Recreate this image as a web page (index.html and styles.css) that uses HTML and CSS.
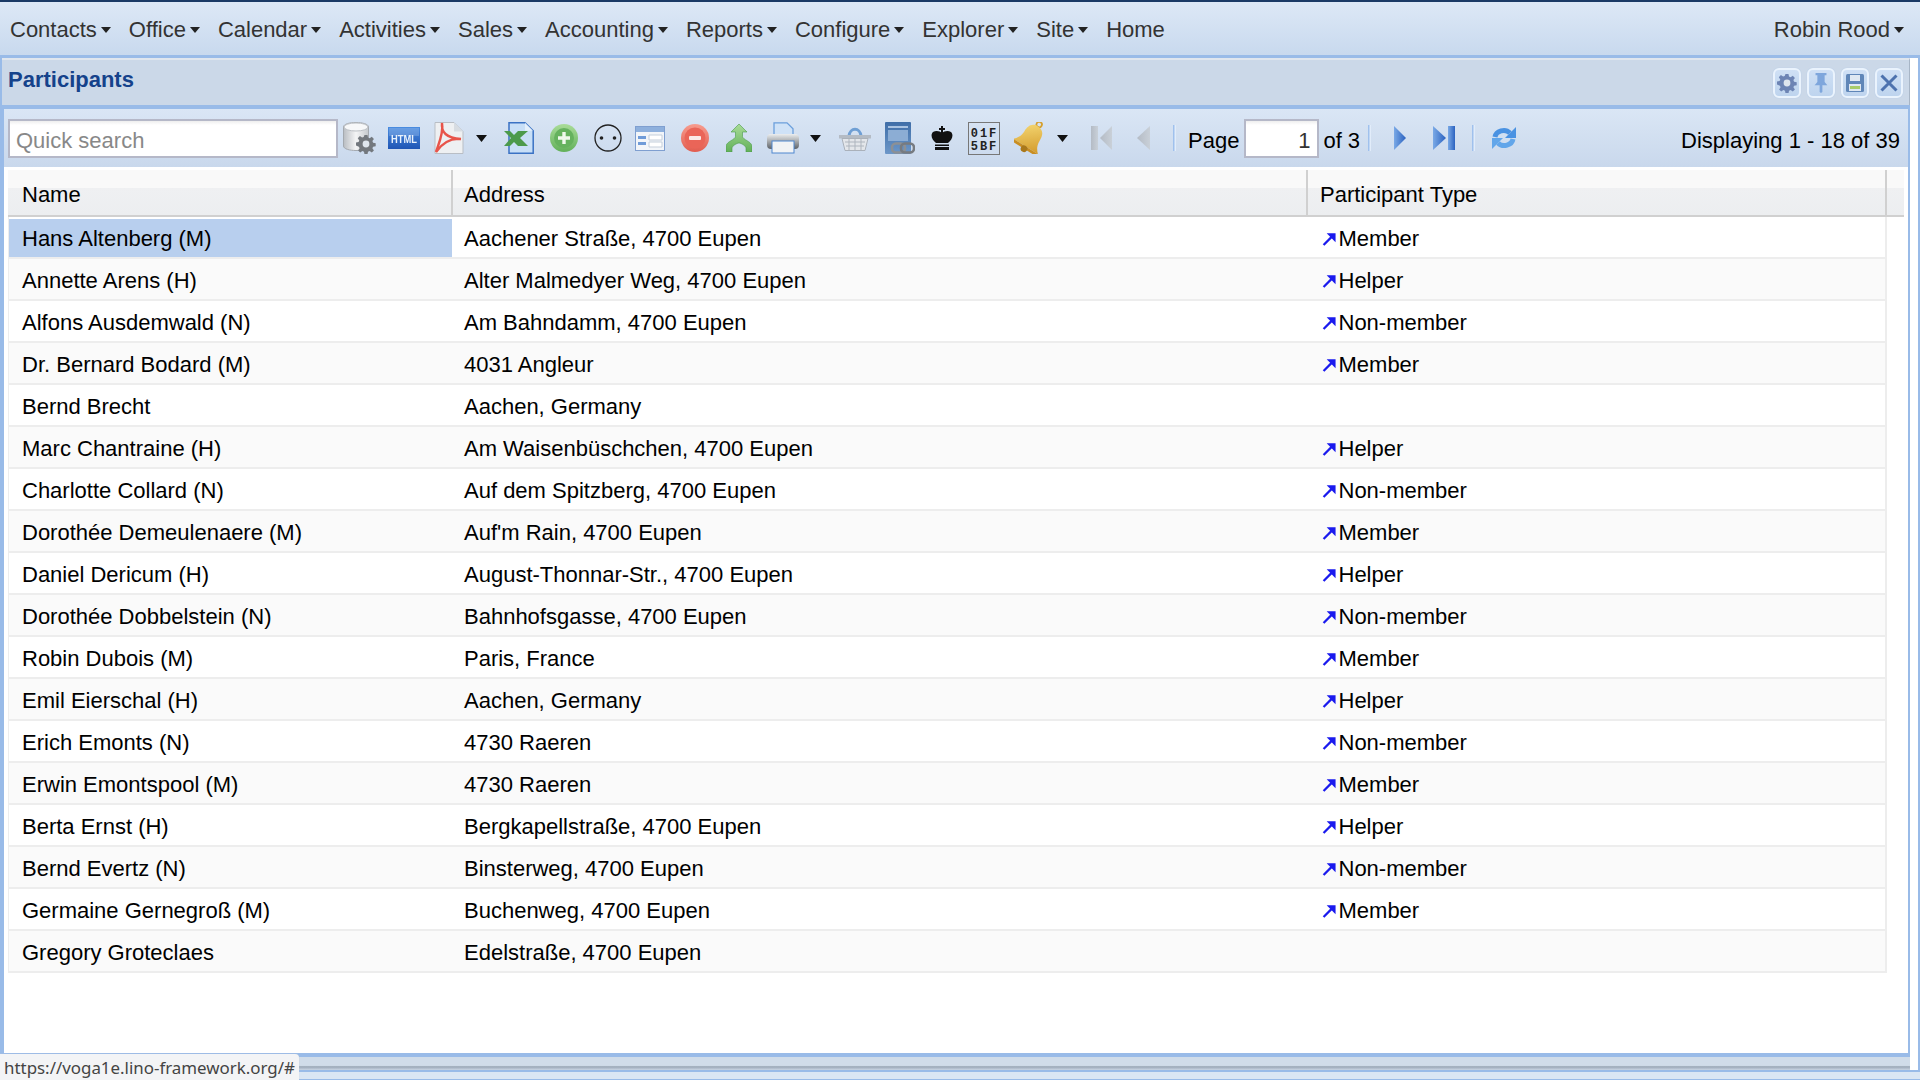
FILE: index.html
```html
<!DOCTYPE html>
<html lang="en">
<head>
<meta charset="utf-8">
<title>Participants</title>
<link rel="stylesheet" href="styles.css">
</head>
<body>
<svg class="defs" aria-hidden="true">
  <defs>
    <linearGradient id="gBlue" x1="0" y1="0" x2="0" y2="1"><stop offset="0" stop-color="#4a8ce0"/><stop offset="1" stop-color="#1f55b5"/></linearGradient>
    <linearGradient id="gNav" x1="0" y1="0" x2="1" y2="0"><stop offset="0" stop-color="#7aa9e6"/><stop offset="1" stop-color="#2b62c0"/></linearGradient>
    <linearGradient id="gGray" x1="0" y1="0" x2="1" y2="0"><stop offset="0" stop-color="#b4bbc5"/><stop offset="1" stop-color="#c9d0d8"/></linearGradient>
    <linearGradient id="gGreen" x1="0" y1="0" x2="0" y2="1"><stop offset="0" stop-color="#a9dc98"/><stop offset="1" stop-color="#62b059"/></linearGradient>
    <linearGradient id="gRed" x1="0" y1="0" x2="0" y2="1"><stop offset="0" stop-color="#f79c8e"/><stop offset="1" stop-color="#e25c4f"/></linearGradient>
    <linearGradient id="gBell" x1="0" y1="0" x2="1" y2="1"><stop offset="0" stop-color="#f8de7c"/><stop offset="1" stop-color="#d39a2a"/></linearGradient>
    <linearGradient id="gCyl" x1="0" y1="0" x2="1" y2="0"><stop offset="0" stop-color="#b9bdc2"/><stop offset=".5" stop-color="#f4f5f6"/><stop offset="1" stop-color="#c4c8cc"/></linearGradient>
    <linearGradient id="gPrn" x1="0" y1="0" x2="0" y2="1"><stop offset="0" stop-color="#eceeef"/><stop offset="1" stop-color="#5d6268"/></linearGradient>
    <linearGradient id="gBook" x1="0" y1="0" x2="0" y2="1"><stop offset="0" stop-color="#3f6ea8"/><stop offset="1" stop-color="#6d97c8"/></linearGradient>
    <symbol id="ext" viewBox="0 0 14 14"><path d="M1.500 12.500 11 3" fill="none" stroke="#1a1aee" stroke-width="2.200"/><path d="M4.500 1.200h8.600v8.600z" fill="#1a1aee"/></symbol>
    <symbol id="gear" viewBox="0 0 20 20"><path d="M8.500 1h3l.5 2.600 1.600.7 2.200-1.500 2.100 2.100-1.500 2.200.7 1.600 2.600.5v3l-2.600.5-.7 1.600 1.500 2.200-2.100 2.100-2.200-1.500-1.600.7-.5 2.600h-3l-.5-2.600-1.600-.7-2.200 1.500-2.100-2.100 1.500-2.200-.7-1.600L0 11.500v-3l2.600-.5.7-1.600-1.500-2.200 2.100-2.100 2.200 1.500 1.600-.7z" fill="currentColor"/><circle cx="10" cy="10" r="3.400" fill="#dfe6ee"/></symbol>
  </defs>
</svg>

<div class="page">
  <nav class="menubar">
    <a class="menu-item">Contacts<i class="mcaret"></i></a>
    <a class="menu-item">Office<i class="mcaret"></i></a>
    <a class="menu-item">Calendar<i class="mcaret"></i></a>
    <a class="menu-item">Activities<i class="mcaret"></i></a>
    <a class="menu-item">Sales<i class="mcaret"></i></a>
    <a class="menu-item">Accounting<i class="mcaret"></i></a>
    <a class="menu-item">Reports<i class="mcaret"></i></a>
    <a class="menu-item">Configure<i class="mcaret"></i></a>
    <a class="menu-item">Explorer<i class="mcaret"></i></a>
    <a class="menu-item">Site<i class="mcaret"></i></a>
    <a class="menu-item">Home</a>
    <a class="menu-item user">Robin Rood<i class="mcaret"></i></a>
  </nav>

  <div class="desk">
    <main class="window">
      <header class="win-head">
        <h1 class="win-title">Participants</h1>
        <div class="win-tools">
          <span class="tool"><svg class="ti ti-gear"><use href="#gear"/></svg></span>
          <span class="tool"><svg class="ti" viewBox="0 0 20 22"><path d="M4 0h12v2.500h-2v7.500l3 3.500H3l3-3.500V2.500H4zM8.500 13.500h3V21l-1.500 1-1.500-1z" fill="#7ea6dc"/></svg></span>
          <span class="tool"><svg class="ti" viewBox="0 0 20 20"><rect x="1" y="1" width="18" height="18" rx="1.500" fill="#5f86b8"/><rect x="5" y="2" width="10" height="6" fill="#dfe8f2"/><rect x="4" y="11" width="12" height="7" fill="#dfe8f2"/><rect x="5" y="13" width="10" height="3" fill="#a7cc6a"/></svg></span>
          <span class="tool"><svg class="ti" viewBox="0 0 20 20"><path d="M2.500 2.500 17.500 17.500M17.500 2.500 2.500 17.500" stroke="#4d72ae" stroke-width="3" fill="none"/></svg></span>
        </div>
      </header>

      <div class="win-body">
        <div class="toolbar">
          <input class="field search" type="text" placeholder="Quick search">
          <svg class="ic i-db" viewBox="0 0 33 32"><path d="M.5 5c0-6 25-6 25 0v19c0 6-25 6-25 0z" fill="url(#gCyl)" stroke="#a4a9af"/><ellipse cx="13" cy="5" rx="12" ry="4" fill="#f7f8f9" stroke="#bcc0c5"/><svg x="13" y="12" width="20" height="20" color="#73787e"><use href="#gear"/></svg></svg>
          <svg class="ic i-html" viewBox="0 0 32 22"><rect width="32" height="22" fill="url(#gBlue)"/><rect x="1" y="1" width="30" height="8" fill="#fff" opacity=".18"/><text x="16" y="16" class="svg-html" textLength="26" lengthAdjust="spacingAndGlyphs">HTML</text></svg>
          <svg class="ic i-pdf" viewBox="0 0 32 32"><path d="M3 .5h19l9 9v22H3z" fill="#eef0f2" stroke="#b9bec5"/><path d="M22 .5v9h9" fill="#d7dce2"/><path d="M10 1c-1 9 4 15 19 16-10-1-18 3-25 13 3-9 8-20 6-29" fill="none" stroke="#e8544a" stroke-width="2.400"/></svg>
          <svg class="caret" viewBox="0 0 11 7"><path d="M0 0h11L5.500 7z"/></svg>
          <svg class="ic i-xls" viewBox="0 0 30 32"><path d="M5 .8h16l8.200 8v22.400H5z" fill="#c8dff7" stroke="#3a72c4" stroke-width="1.500"/><path d="M21 .8V8.800h8" fill="#e5f0fb"/><path d="M0 9h6l4 4 4-4h10l-8 7 8 8H14l-4-4-4 4H0l7-8z" fill="#4c9a4c"/></svg>
          <svg class="ic i-round" viewBox="0 0 28 28"><circle cx="14" cy="14" r="14" fill="url(#gGreen)"/><circle cx="14" cy="14" r="10" fill="#66b25e"/><path d="M12.300 8h3.400v4.300H20v3.400h-4.300V20h-3.400v-4.300H8v-3.400h4.300z" fill="#f0f9ec"/></svg>
          <svg class="ic i-round" viewBox="0 0 28 28"><circle cx="14" cy="14" r="13" fill="none" stroke="#222" stroke-width="1.300"/><circle cx="7.500" cy="14" r="1.800" fill="#222"/><circle cx="20.500" cy="14" r="1.800" fill="#222"/></svg>
          <svg class="ic i-tbl" viewBox="0 0 30 25"><rect x=".5" y=".5" width="29" height="24" fill="#f2f5f9" stroke="#7f9fd0"/><rect x="1" y="1" width="28" height="5" fill="#8eb0dd"/><path d="M3 10h8v3H3zM3 16h8v3H3z" fill="#6f9bd8"/><path d="M14 9h13v5H14zM14 16h13v5H14z" fill="#fff" stroke="#c5cfdb"/></svg>
          <svg class="ic i-round" viewBox="0 0 28 28"><circle cx="14" cy="14" r="14" fill="url(#gRed)"/><circle cx="14" cy="14" r="10.500" fill="#ea6558"/><rect x="8" y="12" width="12" height="4" rx="1" fill="#fbeae6"/></svg>
          <svg class="ic i-merge" viewBox="0 0 26 28"><path d="M13 0 21 8h-4.500v4.500C17 16 25 17 26 22v6h-6v-4c0-2-5-5-7-5s-7 3-7 5v4H0v-6c1-5 9-6 9.500-9.500V8H5z" fill="url(#gGreen)" stroke="#4c9a4a" stroke-width=".6"/></svg>
          <svg class="ic i-print" viewBox="0 0 32 32"><path d="M7 .8h13l6 6V14H7z" fill="#cfe2f7" stroke="#6b9fdc" stroke-width="1.300"/><rect x="0" y="12" width="32" height="15" rx="4" fill="url(#gPrn)"/><rect x="5" y="19" width="22" height="12" fill="#f1f3f5" stroke="#4f87cf"/></svg>
          <svg class="caret" viewBox="0 0 11 7"><path d="M0 0h11L5.500 7z"/></svg>
          <svg class="ic i-bskt" viewBox="0 0 32 25"><path d="M10 10C11 1 21 1 22 10" fill="none" stroke="#6f9fd4" stroke-width="3"/><rect y="9" width="32" height="3.500" fill="#b4bbc4"/><path d="M3 12.500h26l-3 12H6z" fill="#e3e6ea" stroke="#aab1ba"/><path d="M6 16h20M7 20h18M10 13v11M16 13v11M22 13v11" stroke="#aeb5be"/></svg>
          <svg class="ic i-book" viewBox="0 0 30 32"><rect width="26" height="32" rx="1" fill="url(#gBook)"/><rect x="3" y="4" width="20" height="2" fill="#a9c3e2"/><rect x="3" y="8" width="20" height="11" fill="#8cadd4"/><rect x="7" y="21.500" width="13" height="9" rx="4" fill="none" stroke="#8c9095" stroke-width="2.600"/><rect x="16" y="21.500" width="13" height="9" rx="4" fill="none" stroke="#777b80" stroke-width="2.600"/></svg>
          <svg class="ic i-king" viewBox="0 0 22 24"><path d="M10 0h2v2h2v2h-2v3h-2V4H8V2h2z" fill="#111"/><path d="M11 7c2-2 6-3 9-1 3 3 1 8-3 11H5C1 14-1 9 2 6c3-2 7-1 9 1z" fill="#111"/><rect x="4" y="18.500" width="14" height="1.500" fill="#111"/><rect x="4" y="21" width="14" height="3" fill="#111"/></svg>
          <svg class="hex" viewBox="0 0 32 33"><rect x=".5" y=".5" width="31" height="32" fill="none" stroke="#777"/><text x="16.500" y="14.500" class="svg-hex">01F</text><text x="16.500" y="27.500" class="svg-hex">5BF</text></svg>
          <svg class="ic i-bell" viewBox="0 0 30 32"><g transform="translate(2 0) rotate(32 15 16) translate(-2 -2) scale(1.120)"><circle cx="15" cy="2" r="2.400" fill="none" stroke="#d6a02e" stroke-width="1.600"/><path d="M15 4c-6.500 0-8 5-8 10 0 6-3 9-5 11h26c-2-2-5-5-5-11 0-5-1.500-10-8-10z" fill="url(#gBell)"/><path d="M2 25h26l-1 2.500H3z" fill="#c98e22"/><circle cx="15" cy="27.500" r="3" fill="#a9781b"/></g></svg>
          <svg class="caret" viewBox="0 0 11 7"><path d="M0 0h11L5.500 7z"/></svg>
          <svg class="ic i-first" viewBox="0 0 21 24"><rect width="7" height="24" fill="url(#gGray)"/><path d="M21 0v24L9 12z" fill="url(#gGray)"/></svg>
          <svg class="ic i-prev" viewBox="0 0 13 24"><path d="M13 0v24L0 12z" fill="url(#gGray)"/></svg>
          <i class="sep"></i>
          <span class="tb-text t-page">Page</span>
          <input class="field page-no" type="text" value="1">
          <span class="tb-text t-of">of 3</span>
          <i class="sep s-a"></i>
          <svg class="ic i-next" viewBox="0 0 12 24"><path d="M0 0v24l12-12z" fill="url(#gNav)"/></svg>
          <svg class="ic i-last" viewBox="0 0 22 24"><path d="M0 0v24l13-12z" fill="url(#gNav)"/><rect x="15" width="7" height="24" fill="url(#gNav)"/></svg>
          <i class="sep s-b"></i>
          <svg class="ic i-ref" viewBox="0 0 28 28"><path d="M5 13C6 7 15 4 20 9" fill="none" stroke="#4a92e2" stroke-width="5"/><path d="M26 3v11H15z" fill="#4a92e2"/><path d="M23 15C22 21 13 24 8 19" fill="none" stroke="#62a6ea" stroke-width="5"/><path d="M2 25V14h11z" fill="#62a6ea"/></svg>
          <span class="tb-text t-disp">Displaying 1 - 18 of 39</span>
        </div>

        <section class="grid">
          <div class="g-head">
            <div class="hc">Name</div>
            <div class="hc">Address</div>
            <div class="hc">Participant Type</div>
          </div>
          <div class="g-row"><div class="c sel">Hans Altenberg (M)</div><div class="c">Aachener Straße, 4700 Eupen</div><div class="c t"><svg class="ext"><use href="#ext"/></svg>Member</div></div>
          <div class="g-row"><div class="c">Annette Arens (H)</div><div class="c">Alter Malmedyer Weg, 4700 Eupen</div><div class="c t"><svg class="ext"><use href="#ext"/></svg>Helper</div></div>
          <div class="g-row"><div class="c">Alfons Ausdemwald (N)</div><div class="c">Am Bahndamm, 4700 Eupen</div><div class="c t"><svg class="ext"><use href="#ext"/></svg>Non-member</div></div>
          <div class="g-row"><div class="c">Dr. Bernard Bodard (M)</div><div class="c">4031 Angleur</div><div class="c t"><svg class="ext"><use href="#ext"/></svg>Member</div></div>
          <div class="g-row"><div class="c">Bernd Brecht</div><div class="c">Aachen, Germany</div><div class="c t"></div></div>
          <div class="g-row"><div class="c">Marc Chantraine (H)</div><div class="c">Am Waisenbüschchen, 4700 Eupen</div><div class="c t"><svg class="ext"><use href="#ext"/></svg>Helper</div></div>
          <div class="g-row"><div class="c">Charlotte Collard (N)</div><div class="c">Auf dem Spitzberg, 4700 Eupen</div><div class="c t"><svg class="ext"><use href="#ext"/></svg>Non-member</div></div>
          <div class="g-row"><div class="c">Dorothée Demeulenaere (M)</div><div class="c">Auf'm Rain, 4700 Eupen</div><div class="c t"><svg class="ext"><use href="#ext"/></svg>Member</div></div>
          <div class="g-row"><div class="c">Daniel Dericum (H)</div><div class="c">August-Thonnar-Str., 4700 Eupen</div><div class="c t"><svg class="ext"><use href="#ext"/></svg>Helper</div></div>
          <div class="g-row"><div class="c">Dorothée Dobbelstein (N)</div><div class="c">Bahnhofsgasse, 4700 Eupen</div><div class="c t"><svg class="ext"><use href="#ext"/></svg>Non-member</div></div>
          <div class="g-row"><div class="c">Robin Dubois (M)</div><div class="c">Paris, France</div><div class="c t"><svg class="ext"><use href="#ext"/></svg>Member</div></div>
          <div class="g-row"><div class="c">Emil Eierschal (H)</div><div class="c">Aachen, Germany</div><div class="c t"><svg class="ext"><use href="#ext"/></svg>Helper</div></div>
          <div class="g-row"><div class="c">Erich Emonts (N)</div><div class="c">4730 Raeren</div><div class="c t"><svg class="ext"><use href="#ext"/></svg>Non-member</div></div>
          <div class="g-row"><div class="c">Erwin Emontspool (M)</div><div class="c">4730 Raeren</div><div class="c t"><svg class="ext"><use href="#ext"/></svg>Member</div></div>
          <div class="g-row"><div class="c">Berta Ernst (H)</div><div class="c">Bergkapellstraße, 4700 Eupen</div><div class="c t"><svg class="ext"><use href="#ext"/></svg>Helper</div></div>
          <div class="g-row"><div class="c">Bernd Evertz (N)</div><div class="c">Binsterweg, 4700 Eupen</div><div class="c t"><svg class="ext"><use href="#ext"/></svg>Non-member</div></div>
          <div class="g-row"><div class="c">Germaine Gernegroß (M)</div><div class="c">Buchenweg, 4700 Eupen</div><div class="c t"><svg class="ext"><use href="#ext"/></svg>Member</div></div>
          <div class="g-row"><div class="c">Gregory Groteclaes</div><div class="c">Edelstraße, 4700 Eupen</div><div class="c t"></div></div>
        </section>
      </div>
      <div class="collapse-bar"></div>
    </main>
    <div class="side"></div>
  </div>
  <footer class="foot"></footer>
</div>

<div class="status">https://voga1e.lino-framework.org/#</div>
</body>
</html>
```

FILE: styles.css
```css
* { box-sizing: border-box; }
html, body { margin: 0; height: 100%; overflow: hidden; }
body { font-family: "Liberation Sans", Arial, sans-serif; font-size: 22px; color: #000; background: #fff; }
.defs { position: absolute; width: 0; height: 0; }

.page { display: flex; flex-direction: column; height: 1080px; }

/* top menu */
.menubar {
  height: 58px; flex: none; display: flex; align-items: center; padding: 2px 0 0 10px;
  border-top: 2px solid #1b3a66; border-bottom: 3px solid #99bbe8;
  background: linear-gradient(#dde8f6, #c8d9ee);
  color: #333;
}
.menu-item { display: flex; align-items: center; gap: 4px; margin-right: 18px; white-space: nowrap; }
.user { margin-left: auto; margin-right: 16px; }
.mcaret { width: 0; height: 0; border: 5.5px solid transparent; border-top: 6px solid #222; border-bottom: 0; }

.desk { flex: 1; display: flex; min-height: 0; }
.window { flex: 1; display: flex; flex-direction: column; background: #99bbe8; padding-left: 2px; min-width: 0; }
.side { width: 10px; flex: none; background: #fff; border-right: 2px solid #99bbe8; }

/* panel header */
.win-head {
  height: 47px; flex: none; display: flex; align-items: center; justify-content: space-between;
  background: #cbd8e8; border-top: 2px solid #e0e6ee; border-right: 1px solid #a7b5c6; padding: 0 6px 0 6px;
}
.win-title { margin: 0; font-size: 22px; font-weight: bold; color: #15428b; position: relative; top: -3px; }
.win-tools { display: flex; gap: 6px; }
.tool {
  width: 28px; height: 30px; display: flex; align-items: center; justify-content: center;
  border: 2px solid #eaf3fd; border-radius: 6px; background: linear-gradient(#cfe0f5, #bed4ee);
  box-shadow: 0 0 1px #9fc0e8;
}
.ti { width: 20px; height: 20px; filter: blur(.4px); }
.ti-gear { color: #6d84b4; }

/* body */
.win-body { flex: 1; display: flex; flex-direction: column; margin: 4px 2px 4px 2px; background: #fff; min-height: 0; }

.toolbar {
  height: 58px; flex: none; display: flex; align-items: center;
  background: linear-gradient(#dae6f5, #c9d8ec); padding: 0 8px 0 4px;
  box-shadow: 0 2px 0 #99bbe8;
}
.field {
  height: 39px; border: 2px solid #b5b8c8; background: #fff linear-gradient(#eee, #fff 4px);
  font: inherit; color: #333; outline: 0; padding: 6px 6px 0;
}
.search { width: 330px; }
.search::placeholder { color: #888; opacity: 1; }
.page-no { width: 75px; text-align: right; margin-left: 5px; padding-right: 7px; }

.ic, .hex { flex: none; filter: blur(.4px); }
.caret { flex: none; width: 11px; height: 7px; fill: #111; }
.i-db { width: 33px; height: 32px; margin-left: 5px; }
.i-html { width: 32px; height: 22px; margin-left: 12px; }
.i-pdf { width: 32px; height: 32px; margin-left: 12px; }
.i-pdf + .caret { margin-left: 12px; }
.i-xls { width: 30px; height: 32px; margin-left: 17px; }
.i-round { width: 28px; height: 28px; margin-left: 16px; }
.i-tbl { width: 30px; height: 25px; margin-left: 13px; }
.i-merge { width: 26px; height: 28px; margin-left: 17px; }
.i-print { width: 32px; height: 32px; margin-left: 15px; }
.i-print + .caret { margin-left: 11px; }
.i-bskt { width: 32px; height: 25px; margin-left: 18px; }
.i-book { width: 30px; height: 32px; margin-left: 14px; }
.i-king { width: 22px; height: 24px; margin-left: 16px; }
.hex { width: 32px; height: 33px; margin-left: 15px; filter: none; }
.i-bell { width: 30px; height: 32px; margin-left: 14px; }
.i-bell + .caret { margin-left: 13px; }
.i-first { width: 21px; height: 24px; margin-left: 23px; }
.i-prev { width: 13px; height: 24px; margin-left: 25px; }
.i-next { width: 12px; height: 24px; margin-left: 23px; }
.i-last { width: 22px; height: 24px; margin-left: 27px; }
.i-ref { width: 28px; height: 28px; margin-left: 15px; }

.svg-html { font: bold 10px "Liberation Sans", sans-serif; fill: #e8f1fc; text-anchor: middle; }
.svg-hex { font: bold 12px "Liberation Mono", monospace; letter-spacing: 2px; fill: #222; text-anchor: middle; }

.sep { flex: none; width: 3px; height: 26px; margin-left: 23px; background: linear-gradient(90deg, #8fb6ea, #f2f7fd); }
.s-a { margin-left: 8px; }
.s-b { margin-left: 17px; }
.tb-text { white-space: nowrap; color: #000; padding-top: 5px; }
.t-page { margin-left: 12px; }
.t-of { margin-left: 4px; }
.t-disp { margin-left: auto; }

/* grid */
.grid { flex: 1; padding: 3px 4px 0 4px; background: #fff; min-height: 0; }
.g-head, .g-row { display: grid; grid-template-columns: 443px 855px 1fr; }
.g-head {
  height: 47px; width: 1896px; align-items: stretch;
  grid-template-columns: 445px 855px 579px 1fr;
  background: linear-gradient(#f9f9f9 0, #f9f9f9 40%, #eff0f2 40%, #eceef0 100%);
  border-bottom: 2px solid #d0d0d0;
}
.hc { display: flex; align-items: center; padding: 4px 12px 0 14px; border-right: 2px solid #d0d0d0; }
.hc + .hc { padding-left: 11px; }
.hc + .hc + .hc { padding-left: 12px; }

.g-row { height: 42px; width: 1879px; padding-top: 2px; border: solid #ededed; border-width: 0 2px 2px 1px; background: #fff; }
.g-row:nth-child(odd) { background: #fafafa; }
.c { display: flex; align-items: center; padding: 2px 12px 0; white-space: nowrap; min-width: 0; }
.c:first-child { padding-left: 13px; }
.sel { background: #b8cfee; }
.c.t { padding-left: 15px; }
.ext { width: 14.500px; height: 14.500px; margin-right: 2px; flex: none; }

/* bottom */
.collapse-bar { height: 13px; flex: none; background: linear-gradient(#d0dce9 0, #d0dce9 65%, #9aa7b6 75%, #c9d5e3 100%); margin-left: -2px; }
.foot { height: 10px; flex: none; background: #dae6f4; border-top: 2px solid #99bbe8; border-bottom: 1px solid #99bbe8; }

.status {
  position: absolute; left: 0; bottom: 0; height: 26px; width: 299px; padding: 2px 0 0 4px;
  background: #f3f4f6; border-top-right-radius: 4px; box-shadow: 0 0 1px #c8ccd2;
  font: 16.9px/24px "Noto Sans", sans-serif; color: #444; white-space: nowrap;
}
```
